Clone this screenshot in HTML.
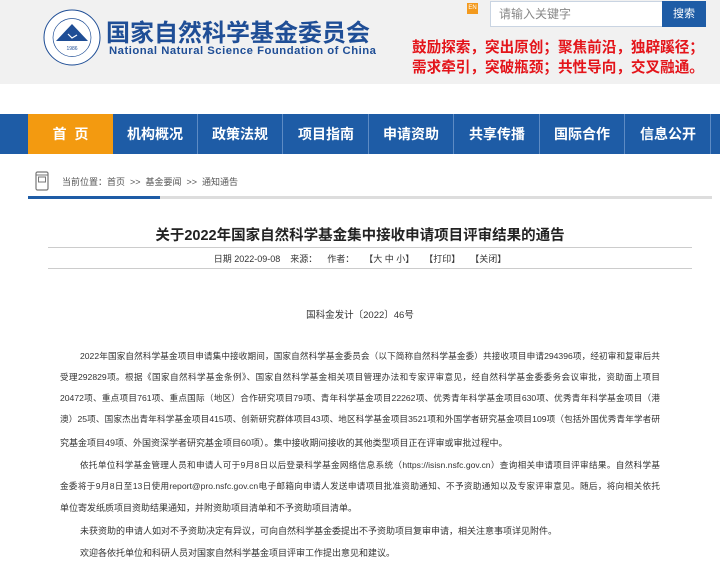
<!DOCTYPE html>
<html><head><meta charset="utf-8"><style>
*{margin:0;padding:0;box-sizing:border-box}
body{width:720px;height:568px;overflow:hidden;background:#fff;font-family:"Liberation Sans","Noto Sans CJK SC",sans-serif;position:relative;color:#333}
.hdr{position:absolute;left:0;top:0;width:720px;height:84px;background:#f1f1f1}
.abs{position:absolute;white-space:nowrap}
.nav{position:absolute;left:0;top:114px;width:720px;height:40px;background:#1e5ca6}
.nav div{position:absolute;top:0;height:40px;width:85px;line-height:40px;text-align:center;color:#fff;font-size:14px;font-weight:bold;border-right:1px solid #5d8bc4}
.l{position:absolute;left:60px;width:600px;font-size:8.6px;line-height:14px;color:#333;white-space:nowrap;text-align:justify;text-align-last:justify}
.i{left:80px;width:580px}
.n{text-align-last:left;font-size:9px}
</style></head><body>
<div class="hdr"></div>
<svg class="abs" style="left:43px;top:9px" width="58" height="57" viewBox="0 0 58 57">
<ellipse cx="29" cy="28.5" rx="28" ry="27.5" fill="#fff" stroke="#1f4e96" stroke-width="1"/>
<circle cx="29" cy="28.5" r="19" fill="none" stroke="#1f4e96" stroke-width="0.7"/>
<polygon points="13,32 29,15 45,32" fill="#1f4e96"/>
<path d="M25,25 l4,4 l5,-3" stroke="#fff" stroke-width="1.2" fill="none"/>
<text x="29" y="41" font-size="5" text-anchor="middle" fill="#1f4e96">1986</text>
</svg>
<div class="abs" style="left:106px;top:13px;font-size:24px;font-weight:bold;color:#1f4e96">国家自然科学基金委员会</div>
<div class="abs" style="left:109px;top:45px;font-size:11.3px;font-weight:bold;color:#1f4e96;letter-spacing:0.5px">National Natural Science Foundation of China</div>
<div class="abs" style="left:467px;top:3px;width:11px;height:11px;background:#f39a1e;color:#fff;font-size:6px;line-height:11px;text-align:center">EN</div>
<div class="abs" style="left:490px;top:1px;width:173px;height:26px;background:#fff;border:1px solid #c9d4e2;font-size:12px;color:#888;line-height:24px;padding-left:8px">请输入关键字</div>
<div class="abs" style="left:662px;top:1px;width:44px;height:26px;background:#1e5ca6;color:#fff;font-size:11px;line-height:26px;text-align:center">搜索</div>
<div class="abs" style="left:412px;top:38px;font-size:14.6px;font-weight:bold;color:#e4141a;line-height:20px">鼓励探索，突出原创；聚焦前沿，独辟蹊径；<br>需求牵引，突破瓶颈；共性导向，交叉融通。</div>
<div class="nav">
<div style="left:28px;background:#f39a10;border-right:none">首&nbsp;&nbsp;页</div>
<div style="left:113px">机构概况</div><div style="left:198px">政策法规</div><div style="left:284px">项目指南</div><div style="left:369px">申请资助</div><div style="left:455px">共享传播</div><div style="left:540px">国际合作</div><div style="left:626px">信息公开</div>
</div>
<svg class="abs" style="left:35px;top:171px" width="14" height="20" viewBox="0 0 14 20"><rect x="1" y="1" width="12" height="18" rx="1.5" fill="none" stroke="#777" stroke-width="1.2"/><rect x="3.5" y="6" width="7" height="5" fill="none" stroke="#777"/><line x1="1" y1="4" x2="13" y2="4" stroke="#777"/></svg>
<div class="abs" style="left:62px;top:175px;font-size:9px;color:#555">当前位置：首页 &nbsp;&gt;&gt;&nbsp; 基金要闻 &nbsp;&gt;&gt;&nbsp; 通知通告</div>
<div class="abs" style="left:28px;top:196px;width:684px;height:3px;background:#ddd"></div>
<div class="abs" style="left:28px;top:196px;width:132px;height:3px;background:#1e5ca6"></div>
<div class="abs" style="left:0;width:720px;text-align:center;top:224px;font-size:14.5px;font-weight:bold;color:#222">关于2022年国家自然科学基金集中接收申请项目评审结果的通告</div>
<div class="abs" style="left:48px;top:247px;width:644px;height:1px;background:#ccc"></div>
<div class="abs" style="left:0;width:720px;text-align:center;top:252px;font-size:9px;color:#333">日期 2022-09-08 &nbsp;&nbsp; 来源： &nbsp;&nbsp; 作者： &nbsp;&nbsp; 【大 中 小】 &nbsp;&nbsp; 【打印】 &nbsp;&nbsp; 【关闭】</div>
<div class="abs" style="left:48px;top:268px;width:644px;height:1px;background:#ccc"></div>
<div class="abs" style="left:0;width:720px;text-align:center;top:307px;font-size:9.5px;color:#333">国科金发计〔2022〕46号</div>
<div class="l i" style="top:349px">2022年国家自然科学基金项目申请集中接收期间，国家自然科学基金委员会（以下简称自然科学基金委）共接收项目申请294396项，经初审和复审后共</div>
<div class="l" style="top:370px">受理292829项。根据《国家自然科学基金条例》、国家自然科学基金相关项目管理办法和专家评审意见，经自然科学基金委委务会议审批，资助面上项目</div>
<div class="l" style="top:391px">20472项、重点项目761项、重点国际（地区）合作研究项目79项、青年科学基金项目22262项、优秀青年科学基金项目630项、优秀青年科学基金项目（港</div>
<div class="l" style="top:412px">澳）25项、国家杰出青年科学基金项目415项、创新研究群体项目43项、地区科学基金项目3521项和外国学者研究基金项目109项（包括外国优秀青年学者研</div>
<div class="l n" style="top:436px">究基金项目49项、外国资深学者研究基金项目60项）。集中接收期间接收的其他类型项目正在评审或审批过程中。</div>
<div class="l i" style="top:458px">依托单位科学基金管理人员和申请人可于9月8日以后登录科学基金网络信息系统（https://isisn.nsfc.gov.cn）查询相关申请项目评审结果。自然科学基</div>
<div class="l" style="top:479px">金委将于9月8日至13日使用report@pro.nsfc.gov.cn电子邮箱向申请人发送申请项目批准资助通知、不予资助通知以及专家评审意见。随后，将向相关依托</div>
<div class="l n" style="top:501px">单位寄发纸质项目资助结果通知，并附资助项目清单和不予资助项目清单。</div>
<div class="l i n" style="top:524px">未获资助的申请人如对不予资助决定有异议，可向自然科学基金委提出不予资助项目复审申请，相关注意事项详见附件。</div>
<div class="l i n" style="top:546px">欢迎各依托单位和科研人员对国家自然科学基金项目评审工作提出意见和建议。</div>
</body></html>
